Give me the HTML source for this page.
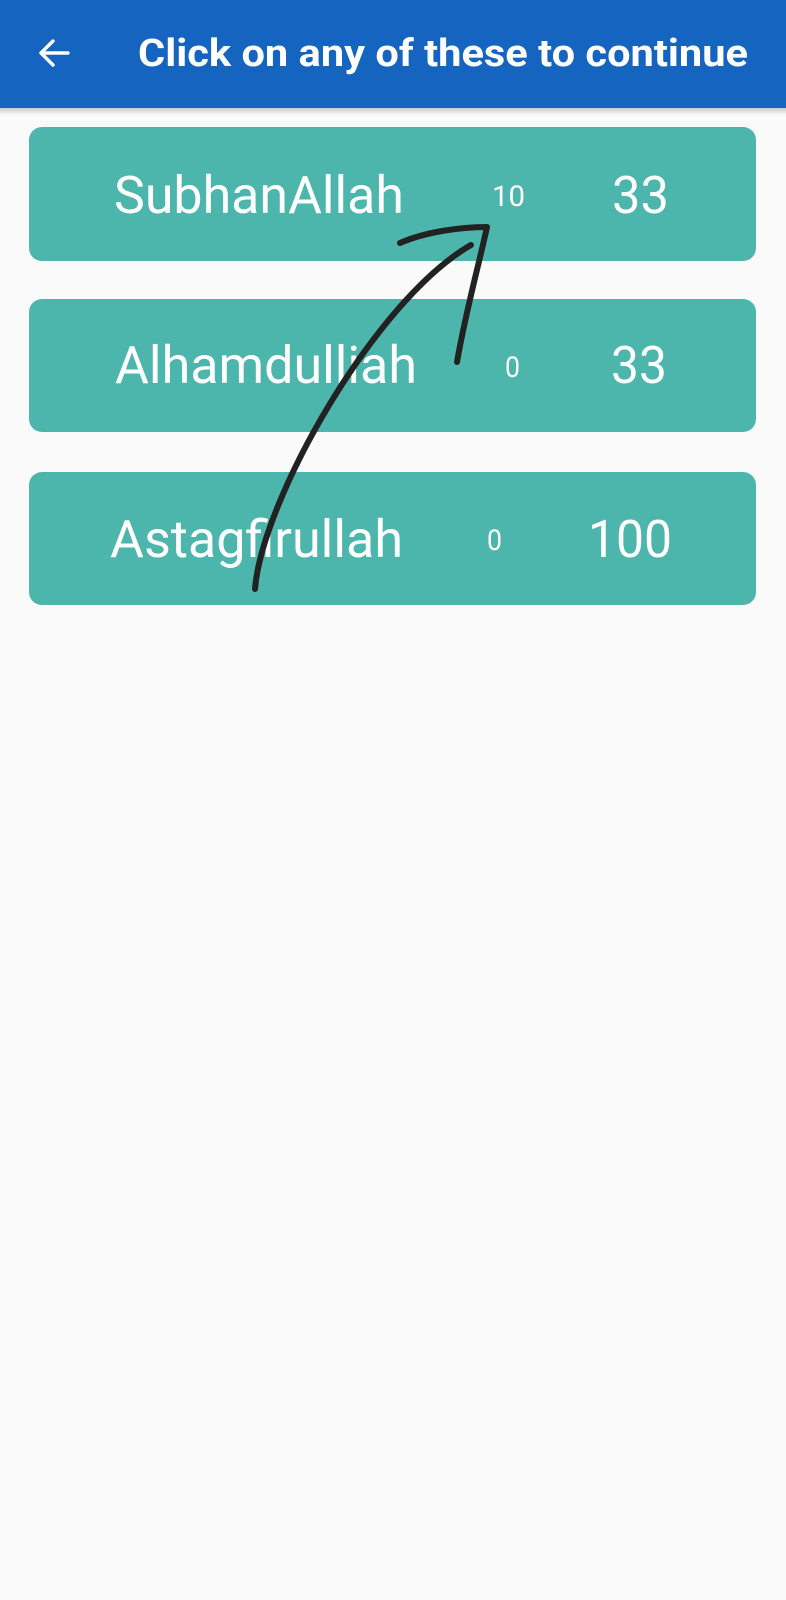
<!DOCTYPE html>
<html><head><meta charset="utf-8"><style>
html,body{margin:0;padding:0;background:#fafafa;width:786px;height:1600px;overflow:hidden}
svg{display:block}
</style></head><body>
<svg width="786" height="1600" viewBox="0 0 786 1600" xmlns="http://www.w3.org/2000/svg" font-family="Roboto, 'Liberation Sans', sans-serif">
<defs><linearGradient id="sh" x1="0" y1="0" x2="0" y2="1"><stop offset="0" stop-color="#000" stop-opacity="0.22"/><stop offset="1" stop-color="#000" stop-opacity="0"/></linearGradient></defs>
<rect width="786" height="1600" fill="#fafafa"/>
<rect x="0" y="107" width="786" height="8" fill="url(#sh)"/>
<rect width="786" height="108" fill="#1565c0"/>
<path d="M68 53H41M53 41L41 53L53 65" stroke="#fff" stroke-width="3.4" fill="none" stroke-linecap="round" stroke-linejoin="round"/>
<text x="138" y="66" fill="#fff" font-size="38" font-weight="bold" textLength="610" lengthAdjust="spacingAndGlyphs">Click on any of these to continue</text>
<g fill="#4db6ac">
<rect x="29" y="127" width="727" height="134" rx="13"/>
<rect x="29" y="299" width="727" height="133" rx="13"/>
<rect x="29" y="472" width="727" height="133" rx="13"/>
</g>
<g fill="#fff">
<text x="114" y="213" font-size="52" textLength="290" lengthAdjust="spacingAndGlyphs">SubhanAllah</text>
<text x="492" y="206" font-size="29" textLength="33" lengthAdjust="spacingAndGlyphs">10</text>
<text x="612" y="213" font-size="52" textLength="57" lengthAdjust="spacingAndGlyphs">33</text>
<text x="115" y="383" font-size="52" textLength="302" lengthAdjust="spacingAndGlyphs">Alhamdulliah</text>
<text x="505" y="377" font-size="29" textLength="15" lengthAdjust="spacingAndGlyphs">0</text>
<text x="611" y="383" font-size="52" textLength="56" lengthAdjust="spacingAndGlyphs">33</text>
<text x="110" y="557" font-size="52" textLength="293" lengthAdjust="spacingAndGlyphs">Astagfirullah</text>
<text x="487" y="550" font-size="29" textLength="15" lengthAdjust="spacingAndGlyphs">0</text>
<text x="588" y="557" font-size="52" textLength="84" lengthAdjust="spacingAndGlyphs">100</text>
</g>
<path d="M255 589C262 500 375 300 471 245" stroke="#222" stroke-width="6" fill="none" stroke-linecap="round"/>
<path d="M400 243C425 232 460 227 487 227C480 260 466 310 457 362" stroke="#222" stroke-width="6" fill="none" stroke-linecap="round" stroke-linejoin="round"/>
</svg>
</body></html>
